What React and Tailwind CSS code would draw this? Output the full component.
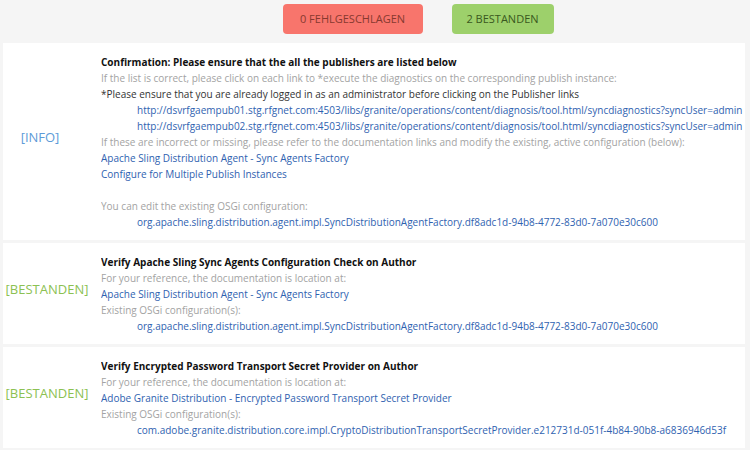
import React from 'react';

const font = { fontFamily: '"Open Sans", "Liberation Sans", sans-serif' };

const Link = ({ children, indent = false }) => (
  <div className={`text-[#2f62b0] whitespace-nowrap ${indent ? 'pl-9' : ''}`}>{children}</div>
);

const Muted = ({ children }) => <div className="text-[#a3a3a3] whitespace-nowrap">{children}</div>;

const Card = ({ label, labelClass, children }) => (
  <div className="flex bg-white py-[11px] pb-[10px]">
    <div className={`w-[88px] shrink-0 flex items-center justify-center pb-[8px] text-[13px] ${labelClass}`}>{label}</div>
    <div className="flex-1 ml-[10px] text-[10px] leading-[16px] overflow-hidden">{children}</div>
  </div>
);

export default function App() {
  return (
    <div className="w-[750px] h-[450px] overflow-hidden bg-[#f5f5f5]" style={font}>
      <div className="flex justify-center gap-[29px] pt-[4px] pb-[9px] pl-[86px]">
        <div className="w-[140px] h-[30px] rounded bg-[#f8756c] text-[#87392f] text-[11px] flex items-center justify-center">
          0 FEHLGESCHLAGEN
        </div>
        <div className="w-[102px] h-[30px] rounded bg-[#9dd06b] text-[#3a5820] text-[11px] flex items-center justify-center">
          2 BESTANDEN
        </div>
      </div>
      <div className="flex flex-col gap-[3px] pl-[3px] pr-[5px]">
        <Card label="[INFO]" labelClass="text-[#5d9bd8] pr-[14px]">
          <div className="font-bold text-[#111] whitespace-nowrap">Confirmation: Please ensure that the all the publishers are listed below</div>
          <Muted>If the list is correct, please click on each link to *execute the diagnostics on the corresponding publish instance:</Muted>
          <div className="text-[#333] whitespace-nowrap">*Please ensure that you are already logged in as an administrator before clicking on the Publisher links</div>
          <Link indent>http://dsvrfgaempub01.stg.rfgnet.com:4503/libs/granite/operations/content/diagnosis/tool.html/syncdiagnostics?syncUser=admin</Link>
          <Link indent>http://dsvrfgaempub02.stg.rfgnet.com:4503/libs/granite/operations/content/diagnosis/tool.html/syncdiagnostics?syncUser=admin</Link>
          <Muted>If these are incorrect or missing, please refer to the documentation links and modify the existing, active configuration (below):</Muted>
          <Link>Apache Sling Distribution Agent - Sync Agents Factory</Link>
          <Link>Configure for Multiple Publish Instances</Link>
          <div className="h-[16px]" />
          <Muted>You can edit the existing OSGi configuration:</Muted>
          <Link indent>org.apache.sling.distribution.agent.impl.SyncDistributionAgentFactory.df8adc1d-94b8-4772-83d0-7a070e30c600</Link>
        </Card>
        <Card label="[BESTANDEN]" labelClass="text-[#8cc152]">
          <div className="font-bold text-[#111] whitespace-nowrap">Verify Apache Sling Sync Agents Configuration Check on Author</div>
          <Muted>For your reference, the documentation is location at:</Muted>
          <Link>Apache Sling Distribution Agent - Sync Agents Factory</Link>
          <Muted>Existing OSGi configuration(s):</Muted>
          <Link indent>org.apache.sling.distribution.agent.impl.SyncDistributionAgentFactory.df8adc1d-94b8-4772-83d0-7a070e30c600</Link>
        </Card>
        <Card label="[BESTANDEN]" labelClass="text-[#8cc152]">
          <div className="font-bold text-[#111] whitespace-nowrap">Verify Encrypted Password Transport Secret Provider on Author</div>
          <Muted>For your reference, the documentation is location at:</Muted>
          <Link>Adobe Granite Distribution - Encrypted Password Transport Secret Provider</Link>
          <Muted>Existing OSGi configuration(s):</Muted>
          <Link indent>com.adobe.granite.distribution.core.impl.CryptoDistributionTransportSecretProvider.e212731d-051f-4b84-90b8-a6836946d53f</Link>
        </Card>
      </div>
    </div>
  );
}
